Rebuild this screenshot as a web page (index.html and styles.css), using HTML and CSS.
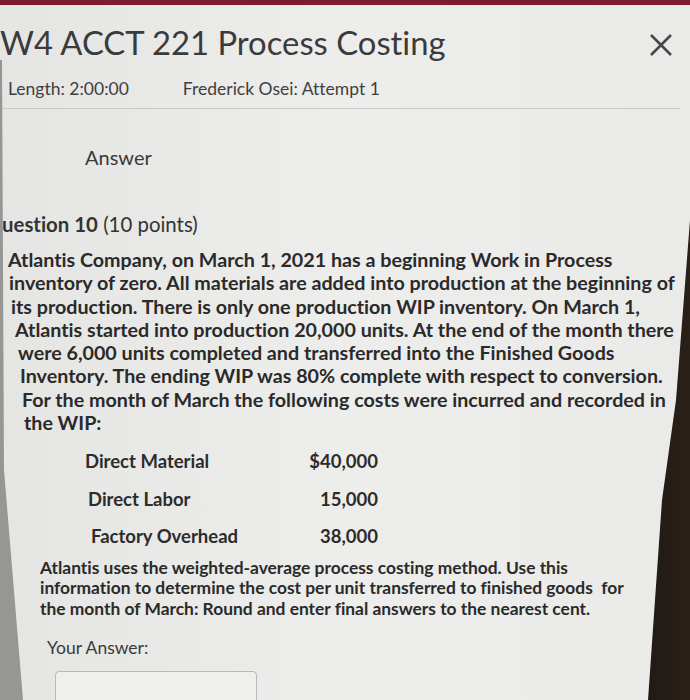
FILE: index.html
```html
<!DOCTYPE html>
<html lang="en">
<head>
<meta charset="utf-8">
<title>W4 ACCT 221 Process Costing</title>
<link rel="stylesheet" href="styles.css">
</head>
<body>
<div class="screen">
  <div class="topbar"></div>
  <header class="head">
    <h1 class="title">W4 ACCT 221 Process Costing</h1>
    <svg class="close" width="24" height="24" viewBox="0 0 24 24"><path d="M2 2 L22 22 M22 2 L2 22" stroke="#474747" stroke-width="2.5" fill="none"/></svg>
  </header>
  <div class="meta">
    <span class="len">Length: 2:00:00</span>
    <span class="att">Frederick Osei: Attempt 1</span>
  </div>
  <div class="answer-link">Answer</div>
  <div class="qhead"><b>uestion 10</b> (10 points)</div>
  <p class="body">
    <span class="ln l1">Atlantis Company, on March 1, 2021 has a beginning Work in Process</span>
    <span class="ln l2">inventory of zero. All materials are added into production at the beginning of</span>
    <span class="ln l3">its production. There is only one production WIP inventory. On March 1,</span>
    <span class="ln l4">Atlantis started into production 20,000 units. At the end of the month there</span>
    <span class="ln l5">were 6,000 units completed and transferred into the Finished Goods</span>
    <span class="ln l6">Inventory. The ending WIP was 80% complete with respect to conversion.</span>
    <span class="ln l7">For the month of March the following costs were incurred and recorded in</span>
    <span class="ln l8">the WIP:</span>
  </p>
  <div class="costs">
    <div class="row"><span class="lbl">Direct Material</span><span class="amt">$40,000</span></div>
    <div class="row r2"><span class="lbl">Direct Labor</span><span class="amt">15,000</span></div>
    <div class="row r3"><span class="lbl">Factory Overhead</span><span class="amt">38,000</span></div>
  </div>
  <p class="instr">
    <span class="ln">Atlantis uses the weighted-average process costing method. Use this</span>
    <span class="ln">information to determine the cost per unit transferred to finished goods &nbsp;for</span>
    <span class="ln">the month of March: Round and enter final answers to the nearest cent.</span>
  </p>
  <div class="your">Your Answer:</div>
  <div class="inputbox"></div>
  <div class="edge-right"></div>
  <div class="edge-left"></div>
</div>
</body>
</html>
```
FILE: styles.css
```css
html, body { margin: 0; padding: 0; }
body {
  background: #e8e8e6;
  font-family: Lato, "Open Sans", sans-serif;
  font-variant-ligatures: none;
  color: #2c2c2c;
  width: 690px;
  height: 700px;
  overflow: hidden;
}
.screen {
  position: relative;
  width: 690px;
  height: 700px;
  background: linear-gradient(90deg, #e5e5e3 0%, #ededeb 50%, #eaeae8 100%);
  overflow: hidden;
}
.topbar {
  height: 5px;
  background: #7c1c2c;
}
.head {
  display: flex;
  align-items: center;
  justify-content: space-between;
  padding: 17px 17px 0 0;
  height: 40px;
}
.title {
  margin: 0;
  font-weight: 400;
  font-size: 32.8px;
  color: #3b3b3b;
  white-space: nowrap;
}
.close { margin-top: 6px; }
.meta {
  display: flex;
  gap: 54px;
  padding: 16px 0 0 8px;
  font-size: 17.5px;
  color: #3f3f3f;
  height: 30px;
  border-bottom: 1.5px solid #c8c8c6;
  margin-right: 10px;
}
.answer-link {
  padding: 36px 0 0 85px;
  font-size: 20px;
  color: #3a3a3a;
}
.qhead {
  padding: 43px 0 0 2px;
  font-size: 20.4px;
  color: #333;
}
.qhead b { font-weight: 700; }
.body {
  margin: 12px 0 0 0;
  font-size: 19.7px;
  font-weight: 700;
  line-height: 23.3px;
  color: #2a2a2a;
}
.ln { display: block; white-space: nowrap; }
.l1 { padding-left: 8px; }
.l2 { padding-left: 9px; }
.l3 { padding-left: 11px; }
.l4 { padding-left: 15px; }
.l5 { padding-left: 18px; }
.l6 { padding-left: 20px; }
.l7 { padding-left: 22px; }
.l8 { padding-left: 24px; }
.costs {
  padding: 16px 0 0 85px;
  font-size: 18.5px;
  font-weight: 700;
  color: #2c2c2c;
}
.row {
  display: flex;
  width: 293px;
  height: 37.5px;
  line-height: 22px;
  align-items: flex-start;
  justify-content: space-between;
}
.r2 { padding-left: 3px; width: 290px; }
.r3 { padding-left: 6px; width: 287px; }
.instr {
  margin: -5px 0 0 40px;
  font-size: 17.4px;
  font-weight: 700;
  line-height: 20.5px;
  color: #2a2a2a;
}
.your {
  padding: 19px 0 0 47px;
  font-size: 17.5px;
  line-height: 20px;
  color: #3a3a3a;
}
.inputbox {
  margin: 13px 0 0 55px;
  width: 200px;
  height: 40px;
  border: 1.5px solid #b8b8b8;
  border-radius: 4px;
  background: #efefed;
}
.edge-right {
  position: absolute;
  inset: 0;
  background: linear-gradient(90deg, #0d0d0d 0%, #111010 85%, #2b2019 100%);
  clip-path: polygon(690px 220px, 676px 400px, 662px 500px, 648px 700px, 690px 700px);
}
.edge-left {
  position: absolute;
  inset: 0;
  background: #969694;
  clip-path: polygon(0 60px, 2px 60px, 4px 470px, 23px 700px, 0 700px);
}
```
